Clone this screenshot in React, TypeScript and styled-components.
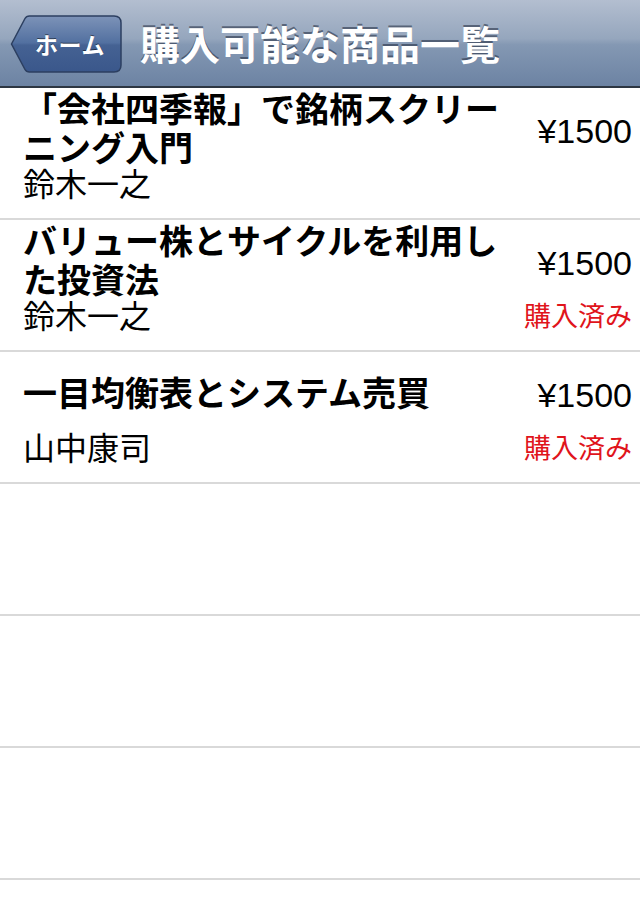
import React from "react";
import styled, { createGlobalStyle } from "styled-components";

const GlobalStyle = createGlobalStyle`
  html, body {
    margin: 0;
    padding: 0;
    background: #ffffff;
  }
  body {
    font-family: "Noto Sans CJK JP", "Liberation Sans", sans-serif;
    -webkit-font-smoothing: antialiased;
  }
`;

const Screen = styled.div`
  width: 640px;
  height: 920px;
  overflow: hidden;
  background: #ffffff;
  display: flex;
  flex-direction: column;
`;

const NavBar = styled.header`
  flex: 0 0 auto;
  height: 86px;
  border-top: 1px solid #cdd5df;
  border-bottom: 2px solid #2d3642;
  box-sizing: content-box;
  margin-top: -1px;
  background: linear-gradient(
    to bottom,
    #b3bed0 0%,
    #95a6bd 45%,
    #8498b3 52%,
    #6c83a3 100%
  );
  display: flex;
  align-items: center;
  padding-left: 10px;
  gap: 18px;
`;

const BackButton = styled.button`
  position: relative;
  width: 112px;
  height: 58px;
  margin-top: 1px;
  padding: 0 17px 0 25px;
  border: none;
  background: transparent;
  display: flex;
  align-items: center;
  justify-content: center;
  cursor: pointer;
`;

const ButtonShape = styled.svg`
  position: absolute;
  inset: 0;
  width: 112px;
  height: 58px;
`;

const ButtonLabel = styled.span`
  position: relative;
  font-family: "Noto Sans CJK JP", sans-serif;
  font-weight: 700;
  font-size: 23px;
  line-height: 28px;
  color: #ffffff;
  text-shadow: 0 -1px 0 rgba(0, 0, 0, 0.5);
  letter-spacing: 0.5px;
`;

const Title = styled.h1`
  margin: 0;
  font-family: "Noto Sans CJK JP", sans-serif;
  font-weight: 700;
  font-size: 40px;
  line-height: 48px;
  color: #ffffff;
  text-shadow: 0 -2px 0 rgba(40, 50, 70, 0.6);
  white-space: nowrap;
`;

const List = styled.ul`
  list-style: none;
  margin: 0;
  padding: 0;
  flex: 1 1 auto;
`;

const Row = styled.li`
  height: 130px;
  border-bottom: 2px solid #d9d9d9;
  display: grid;
  grid-template-columns: 490px 1fr;
  padding: 0 8px 0 23px;
`;

const Left = styled.div`
  display: flex;
  flex-direction: column;
`;

const TitleBox = styled.div`
  height: 78px;
  display: flex;
  align-items: center;
`;

const ItemTitle = styled.div`
  font-family: "Noto Sans CJK JP", sans-serif;
  font-weight: 700;
  font-size: 34px;
  line-height: 39px;
  color: #000000;
`;

const Author = styled.div`
  font-family: "Noto Sans CJK JP", sans-serif;
  font-weight: 400;
  font-size: 32px;
  line-height: 32px;
  color: #000000;
`;

const Right = styled.div`
  display: flex;
  flex-direction: column;
  align-items: flex-end;
`;

const Price = styled.div`
  margin-top: 26px;
  font-family: "Liberation Sans", Arial, sans-serif;
  font-size: 34px;
  line-height: 34px;
  color: #000000;
`;

const Status = styled.div`
  margin-top: 19px;
  font-family: "Noto Sans CJK JP", sans-serif;
  font-size: 27px;
  line-height: 32px;
  color: #e0141b;
`;

type Item = {
  title: string;
  author: string;
  price: string;
  purchased: boolean;
};

const items: Item[] = [
  {
    title: "「会社四季報」で銘柄スクリーニング入門",
    author: "鈴木一之",
    price: "¥1500",
    purchased: false,
  },
  {
    title: "バリュー株とサイクルを利用した投資法",
    author: "鈴木一之",
    price: "¥1500",
    purchased: true,
  },
  {
    title: "一目均衡表とシステム売買",
    author: "山中康司",
    price: "¥1500",
    purchased: true,
  },
];

const emptyRows = [0, 1, 2, 3];

export default function App() {
  return (
    <>
      <GlobalStyle />
      <Screen>
        <NavBar>
          <BackButton type="button">
            <ButtonShape viewBox="0 0 112 58" aria-hidden="true">
              <defs>
                <linearGradient id="backFill" x1="0" y1="0" x2="0" y2="1">
                  <stop offset="0%" stopColor="#7d93b8" />
                  <stop offset="48%" stopColor="#5270a0" />
                  <stop offset="52%" stopColor="#456293" />
                  <stop offset="100%" stopColor="#3a578b" />
                </linearGradient>
              </defs>
              <path
                d="M1.5 29 L15 3.5 Q16.3 1 19.5 1 H104 Q111 1 111 8 V50 Q111 57 104 57 H19.5 Q16.3 57 15 54.5 Z"
                fill="url(#backFill)"
                stroke="#2c3f60"
                strokeWidth="1.5"
              />
            </ButtonShape>
            <ButtonLabel>ホーム</ButtonLabel>
          </BackButton>
          <Title>購入可能な商品一覧</Title>
        </NavBar>
        <List>
          {items.map((item) => (
            <Row key={item.title}>
              <Left>
                <TitleBox>
                  <ItemTitle>{item.title}</ItemTitle>
                </TitleBox>
                <Author>{item.author}</Author>
              </Left>
              <Right>
                <Price>{item.price}</Price>
                {item.purchased && <Status>購入済み</Status>}
              </Right>
            </Row>
          ))}
          {emptyRows.map((n) => (
            <Row key={`empty-${n}`} />
          ))}
        </List>
      </Screen>
    </>
  );
}
